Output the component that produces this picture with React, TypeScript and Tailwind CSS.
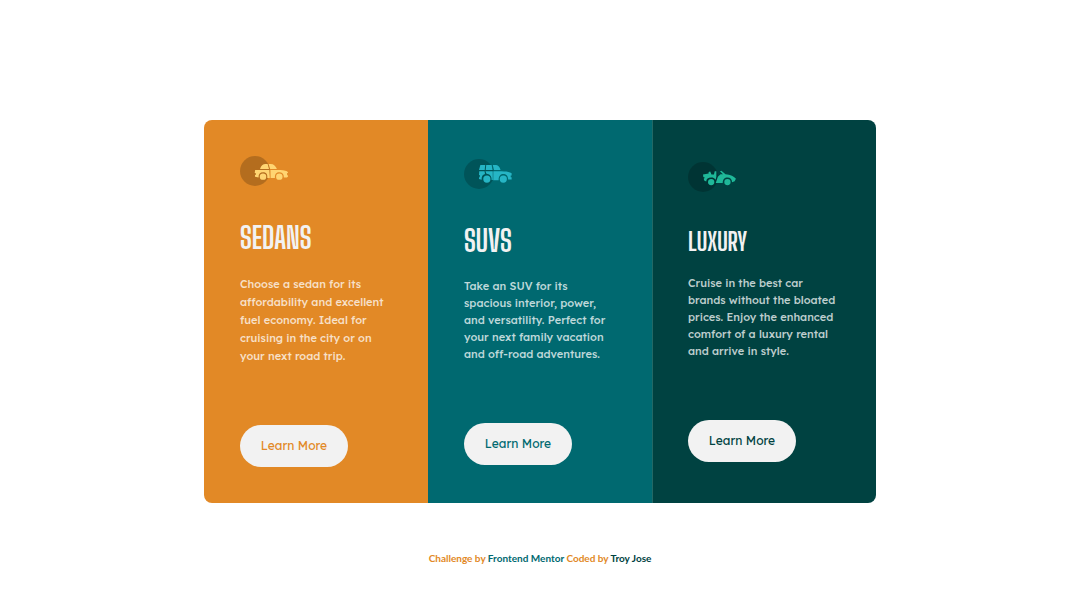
import type { ReactNode } from "react";

function SedanIcon() {
  return (
    <svg viewBox="0 0 64 40" className="h-[30px] w-12 shrink-0" aria-hidden="true">
      <circle cx="20" cy="20" r="20" fill="#000" fillOpacity=".2" />
      <g fill="#ffd572">
        <path d="M26.7 17.4C28 13 30.5 10.7 34 10.7H36.8L38.7 17.4Z" />
        <path d="M38.2 10.7H41C45 10.7 47.5 13.5 49.2 17.4H40.3Z" />
        <path d="M20.2 18.6H39.2L39.7 29.3H36.4C37 24 34.5 21.8 30.7 21.8S24.6 24 24.7 28.5L20 27.6V25.4H21V22.6H19.6Z" />
        <path d="M40.6 18.6H53.5C59 19 63 19.6 63.9 21.5V22.8H62.8V25.6H63.9V27.6L62.5 28.5H58.5C58.6 24 56 21.8 52.4 21.8S46.3 24 46.6 29.3H40.8Z" />
        <circle cx="30.7" cy="27.5" r="4.3" />
        <circle cx="52.4" cy="27.5" r="4.3" />
      </g>
    </svg>
  );
}

function SuvIcon() {
  return (
    <svg viewBox="0 0 64 40" className="h-[30px] w-12 shrink-0" aria-hidden="true">
      <circle cx="20" cy="20" r="20" fill="#000" fillOpacity=".2" />
      <g fill="#26b5c5">
        <path d="M21.8 8H28.3L27.6 14.8H20Z" />
        <path d="M29.6 8H36.8L38.2 14.8H29Z" />
        <path d="M38.4 8H43C45.8 8.2 47.5 10.5 48.8 14.8H39.9Z" />
        <path d="M20.3 16.4H27.4L28 19.9C24.8 20.6 23.3 23 23.5 27.5L20 26.6V24.4H21V21.4H20Z" />
        <path d="M28.6 16.4H38.4V28H36.8C37 22.8 34.2 20 30 19.8Z" />
        <path d="M39 16.4H50C56.5 16.6 61 17.3 63.5 19V22H62.3V24.2H63.5V27.2H58.8C59 22.6 56.1 20 52.4 20S46 22.6 46.2 28.2H39Z" />
        <circle cx="30.5" cy="26.8" r="4.8" />
        <circle cx="52.4" cy="26.8" r="4.8" />
      </g>
    </svg>
  );
}

function LuxuryIcon() {
  return (
    <svg viewBox="0 0 64 40" className="h-[30px] w-12 shrink-0" aria-hidden="true">
      <circle cx="20" cy="20" r="20" fill="#000" fillOpacity=".2" />
      <g fill="#1fb899">
        <path d="M20 16.8L27.5 15.2V13.4L29.6 12.8L31.3 16.8H34.6L35.6 12.4H37.8V19.6L36.8 23.8C35.4 21.6 33.4 20.8 30.9 20.8C26.8 20.8 24.5 23 24.3 26L21.6 24.7L21 22.3L22.5 21L20.4 20Z" />
        <path d="M42.6 12.3L44.5 11.8L50 16.2C56.5 16.6 61.8 19.1 63.9 22.4L62.2 25.8L58.8 27C58.6 23 56.3 20.8 52.6 20.8S46.4 23 46.3 28H37L39.8 19.6L43.4 16.4H46.6Z" />
        <circle cx="30.9" cy="26.7" r="4.2" />
        <circle cx="52.6" cy="26.7" r="4.2" />
      </g>
    </svg>
  );
}

type CarPanel = {
  name: string;
  text: string;
  icon: ReactNode;
  panel: string;
  heading: string;
  body: string;
  button: string;
};

const panels: CarPanel[] = [
  {
    name: "SEDANS",
    text: "Choose a sedan for its affordability and excellent fuel economy. Ideal for cruising in the city or on your next road trip.",
    icon: <SedanIcon />,
    panel: "bg-[#e28926] px-9",
    heading: "text-[29px] leading-10",
    body: "leading-[18px]",
    button: "text-[#e28926]",
  },
  {
    name: "SUVS",
    text: "Take an SUV for its spacious interior, power, and versatility. Perfect for your next family vacation and off-road adventures.",
    icon: <SuvIcon />,
    panel: "bg-[#006970] px-9",
    heading: "text-[29px] leading-10",
    body: "leading-[17px]",
    button: "text-[#006970]",
  },
  {
    name: "LUXURY",
    text: "Cruise in the best car brands without the bloated prices. Enjoy the enhanced comfort of a luxury rental and arrive in style.",
    icon: <LuxuryIcon />,
    panel: "border-l border-[#226966] bg-[#004241] pr-9 pl-[35px]",
    heading: "text-[25px] leading-[34px]",
    body: "leading-[17px]",
    button: "text-[#004241]",
  },
];

export default function App() {
  return (
    <div className="min-h-screen bg-white px-6 pt-[120px] pb-10 font-['Lexend_Deca',Inter,sans-serif]">
      <main className="mx-auto grid max-w-2xl overflow-hidden rounded-lg sm:grid-cols-3">
        {panels.map((p) => (
          <section
            key={p.name}
            className={`flex flex-col items-start justify-center py-9 ${p.panel}`}
          >
            {p.icon}
            <h2
              className={`mt-8 mb-[17px] font-['Big_Shoulders_Display','Roboto_Condensed',sans-serif] font-bold text-[#f2f2f2] ${p.heading}`}
            >
              {p.name}
            </h2>
            <p className={`text-[11px] font-medium text-white/75 ${p.body}`}>{p.text}</p>
            <button
              type="button"
              className={`mt-[60px] h-[42px] w-[108px] rounded-full bg-[#f2f2f2] text-xs font-normal ${p.button}`}
            >
              Learn More
            </button>
          </section>
        ))}
      </main>
      <footer className="mt-12 text-center font-[Lato,sans-serif] text-[10px] leading-[15px] font-bold text-[#e28926]">
        Challenge by{" "}
        <a href="https://www.frontendmentor.io" className="text-[#006970]">
          Frontend Mentor
        </a>{" "}
        Coded by{" "}
        <a href="#" className="text-[#004241]">
          Troy Jose
        </a>
      </footer>
    </div>
  );
}
